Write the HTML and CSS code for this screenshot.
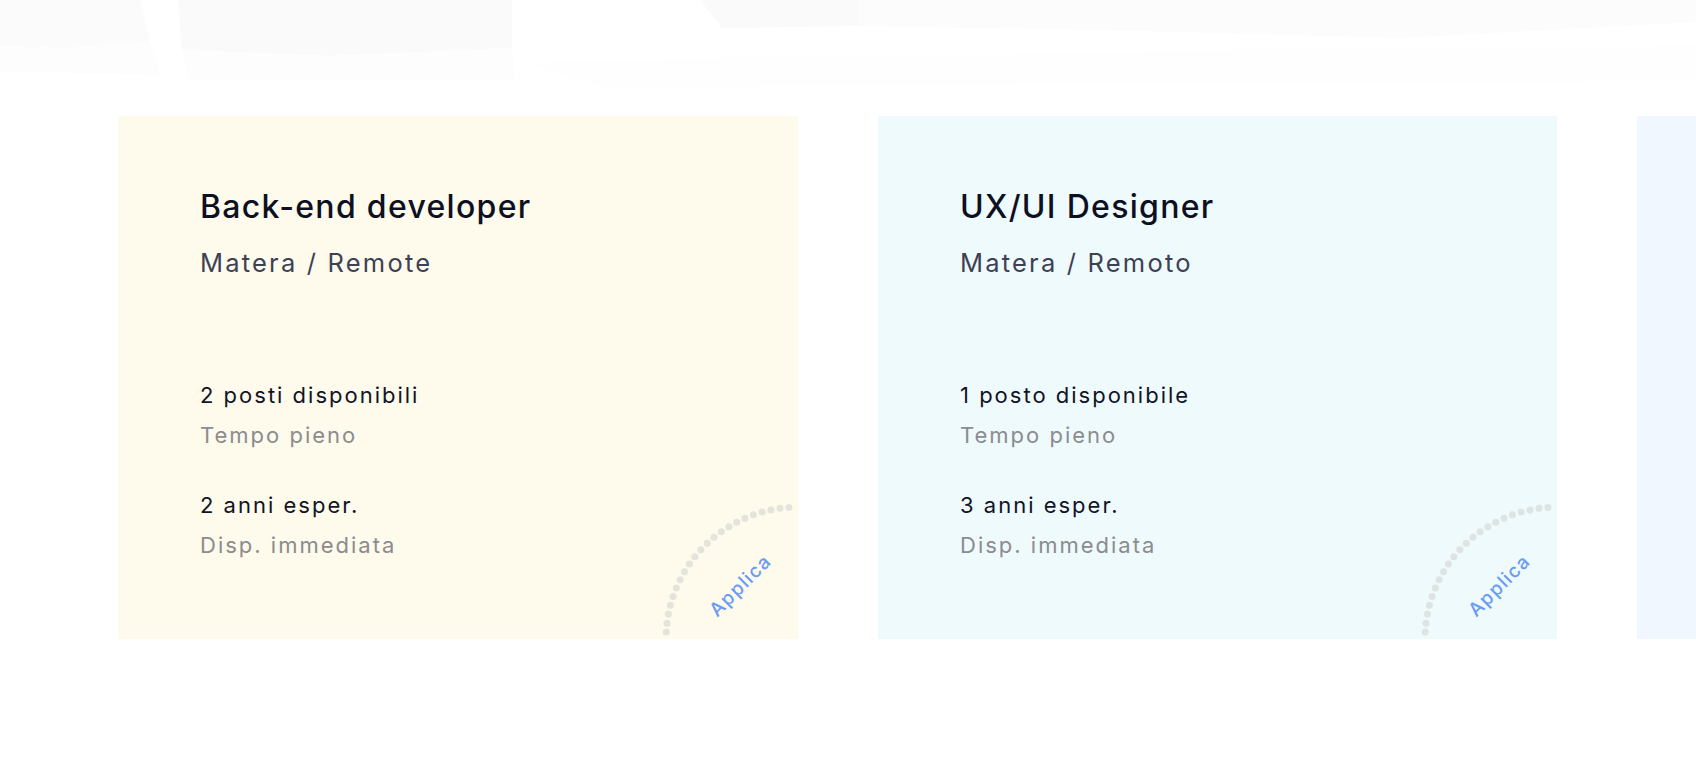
FILE: index.html
```html
<!DOCTYPE html>
<html lang="it">
<head>
<meta charset="utf-8">
<title>Posizioni aperte</title>
<link rel="stylesheet" href="styles.css">
</head>
<body>
<div class="page">
  <svg class="backdrop" width="1696" height="110" viewBox="0 0 1696 110" aria-hidden="true">
    <polygon points="0,0 140,0 150,42 60,48 0,46" fill="#fbfbfb"/>
    <polygon points="0,46 60,48 150,42 160,75 0,72" fill="#fdfdfd"/>
    <polygon points="178,0 512,0 512,48 330,56 182,50" fill="#fafafa"/>
    <polygon points="182,50 330,56 512,48 515,80 190,80" fill="#fdfdfd"/>
    <polygon points="700,0 858,0 858,26 722,28" fill="#fafafa"/>
    <polygon points="858,0 1696,0 1696,22 1400,38 1100,30 858,26" fill="#fcfcfc"/>
    <polygon points="520,62 1100,52 1696,45 1696,82 600,86" fill="#fefefe"/>
  </svg>
  <section class="jobs">
    <article class="card card-yellow">
      <h2 class="title">Back-end developer</h2>
      <p class="place">Matera / Remote</p>
      <div class="info">
        <p class="strong">2 posti disponibili</p>
        <p class="muted">Tempo pieno</p>
        <p class="strong gap">2 anni esper.</p>
        <p class="muted">Disp. immediata</p>
      </div>
      <svg class="apply" width="140" height="140" viewBox="0 0 140 140">
        <path class="dots" d="M 8.2 133.1 A 132 132 0 0 1 131 8.4"/>
        <text class="apply-text" x="87" y="91" text-anchor="middle" transform="rotate(-45 87 91)">Applica</text>
      </svg>
    </article>
    <article class="card card-blue">
      <h2 class="title">UX/UI Designer</h2>
      <p class="place">Matera / Remoto</p>
      <div class="info">
        <p class="strong">1 posto disponibile</p>
        <p class="muted">Tempo pieno</p>
        <p class="strong gap">3 anni esper.</p>
        <p class="muted">Disp. immediata</p>
      </div>
      <svg class="apply" width="140" height="140" viewBox="0 0 140 140">
        <path class="dots" d="M 8.2 133.1 A 132 132 0 0 1 131 8.4"/>
        <text class="apply-text" x="87" y="91" text-anchor="middle" transform="rotate(-45 87 91)">Applica</text>
      </svg>
    </article>
    <article class="card card-sky"></article>
  </section>
</div>
</body>
</html>
```
FILE: styles.css
```css
html, body {
  margin: 0;
  padding: 0;
  background: #ffffff;
  overflow: hidden;
}
body {
  font-family: Inter, "Noto Sans", sans-serif;
  color: #0f1222;
}
.page {
  position: relative;
  width: 1696px;
  height: 770px;
}
.backdrop {
  position: absolute;
  left: 0;
  top: 0;
}
.jobs {
  position: relative;
  display: flex;
  gap: 80px;
  padding: 116px 0 0 118px;
}
.card {
  position: relative;
  flex: 0 0 680px;
  height: 523px;
  box-sizing: border-box;
  padding: 71px 30px 0 82px;
  overflow: hidden;
}
.card-yellow { background: #fefaec; }
.card-blue { background: #effafd; flex-basis: 679px; }
.card-sky { background: #f0f7fe; }
.title {
  margin: 0;
  font-size: 32px;
  line-height: 40px;
  font-weight: 500;
  letter-spacing: 1.3px;
  color: #0d1021;
}
.place {
  margin: 19px 0 0;
  font-size: 25.5px;
  line-height: 34px;
  font-weight: 400;
  letter-spacing: 2.2px;
  color: #3c4153;
}
.info {
  margin-top: 95px;
}
.info p {
  margin: 0;
  font-size: 22px;
  line-height: 40px;
  letter-spacing: 2px;
}
.strong { color: #111425; }
.muted { color: #8b8c8e; }
.gap { margin-top: 30px !important; }
.apply {
  position: absolute;
  right: 0;
  bottom: 0;
}
.dots {
  fill: none;
  stroke: rgba(207, 210, 207, 0.56);
  stroke-width: 7;
  stroke-linecap: round;
  stroke-dasharray: 0 9.1;
}
.apply-text {
  font-family: Inter, "Noto Sans", sans-serif;
  font-size: 19px;
  font-weight: 500;
  letter-spacing: 1.4px;
  fill: #6b9cf4;
}
```
